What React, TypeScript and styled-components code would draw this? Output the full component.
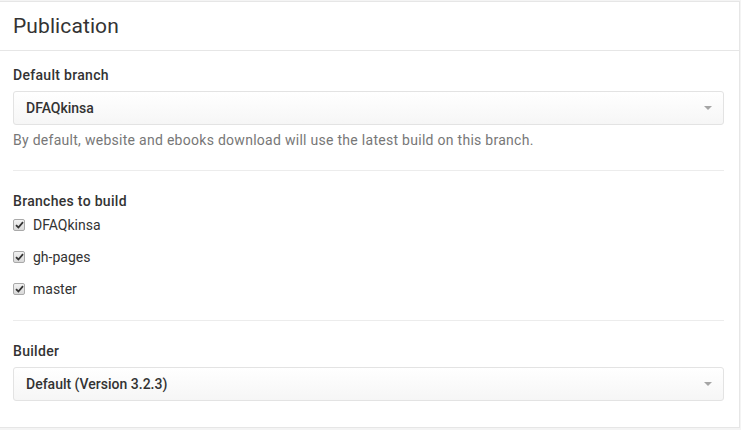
import React from "react";
import styled, { createGlobalStyle } from "styled-components";

const Global = createGlobalStyle`
  html, body { margin: 0; padding: 0; background: #f4f4f4; }
  body { font-family: Roboto, "Liberation Sans", sans-serif; color: #333; }
  * { box-sizing: border-box; }
`;

const Page = styled.div`
  width: 741px;
  height: 430px;
  padding-top: 1px;
  overflow: hidden;
`;

const Panel = styled.section`
  margin-left: -1px;
  width: 741px;
  height: 427px;
  background: #fff;
  border: 1px solid #e6e6e6;
  display: flex;
  flex-direction: column;
`;

const Header = styled.header`
  height: 49px;
  padding: 0 13px;
  display: flex;
  align-items: center;
  border-bottom: 1px solid #e6e6e6;
`;

const Title = styled.h2`
  margin: 0;
  font-size: 21px;
  font-weight: 400;
  color: #333;
  letter-spacing: 0.1px;
`;

const Body = styled.div`
  padding: 14px 15px 0 13px;
`;

const Group = styled.div<{ $pb?: number }>`
  padding-bottom: ${(p) => p.$pb ?? 20}px;
`;

const Divider = styled.hr`
  margin: 0 0 20px;
  border: 0;
  border-top: 1px solid #ececec;
`;

const Label = styled.div`
  font-size: 14px;
  font-weight: 500;
  color: #333;
  line-height: 20px;
  letter-spacing: 0.3px;
  margin-bottom: 6px;
`;

const SelectBox = styled.div`
  height: 34px;
  border: 1px solid #e3e3e3;
  border-radius: 3px;
  background: linear-gradient(#fff, #f6f6f6);
  display: flex;
  align-items: center;
  justify-content: space-between;
  padding: 0 11px 0 12px;
  font-size: 14px;
  font-weight: 500;
  color: #333;
`;

const Caret = styled.span`
  width: 0;
  height: 0;
  border-left: 4px solid transparent;
  border-right: 4px solid transparent;
  border-top: 4px solid #a5a5a5;
`;

const Help = styled.p`
  margin: 5px 0 0;
  font-size: 14px;
  color: #777;
  line-height: 20px;
  letter-spacing: 0.28px;
`;

const CheckList = styled.div`
  display: flex;
  flex-direction: column;
  gap: 12px;
  margin-top: -2px;
`;

const CheckRow = styled.label`
  display: flex;
  align-items: center;
  gap: 8px;
  height: 20px;
  font-size: 14px;
  color: #333;
`;

const Box = styled.span`
  width: 12px;
  height: 12px;
  border: 1px solid #a9a9a9;
  border-radius: 2px;
  background: linear-gradient(#f2f2f2, #d9d9d9);
  display: flex;
  align-items: center;
  justify-content: center;
`;

const Check = () => (
  <Box>
    <svg width="9" height="8" viewBox="0 0 9 8">
      <path d="M1 4.2 L3.4 6.5 L8 1.2" fill="none" stroke="#333" strokeWidth="1.8" />
    </svg>
  </Box>
);

const branches = ["DFAQkinsa", "gh-pages", "master"];

export default function App() {
  return (
    <Page>
      <Global />
      <Panel>
        <Header>
          <Title>Publication</Title>
        </Header>
        <Body>
          <Group>
            <Label>Default branch</Label>
            <SelectBox>
              <span>DFAQkinsa</span>
              <Caret />
            </SelectBox>
            <Help>By default, website and ebooks download will use the latest build on this branch.</Help>
          </Group>
          <Divider />
          <Group $pb={21}>
            <Label>Branches to build</Label>
            <CheckList>
              {branches.map((b) => (
                <CheckRow key={b}>
                  <Check />
                  {b}
                </CheckRow>
              ))}
            </CheckList>
          </Group>
          <Divider />
          <Group>
            <Label>Builder</Label>
            <SelectBox>
              <span>Default (Version 3.2.3)</span>
              <Caret />
            </SelectBox>
          </Group>
        </Body>
      </Panel>
    </Page>
  );
}
